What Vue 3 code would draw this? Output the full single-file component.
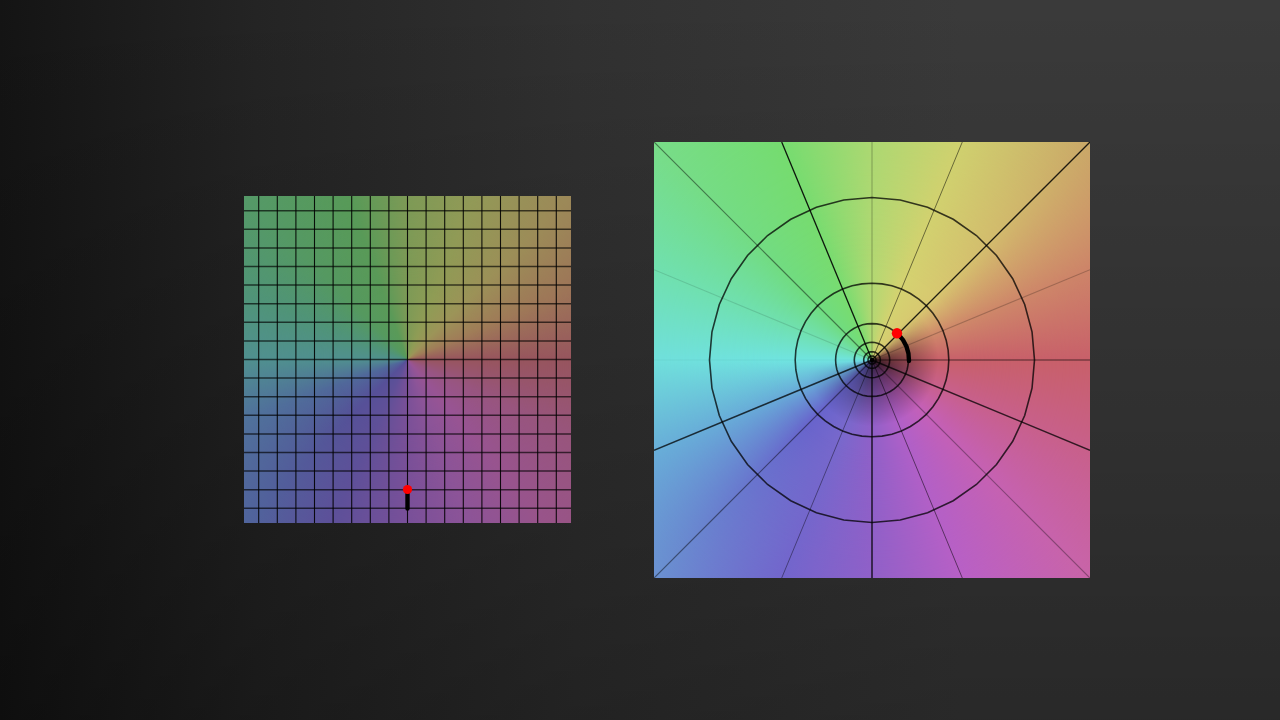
<template>
  <div class="page">
    <div class="panel panel-grid">
      <div class="swirl"></div>
      <svg class="lines" viewBox="-163.5 -163.5 327 327">
        <line v-for="k in gridSteps" :key="'v' + k" class="grid-v" :x1="k * 18.6" y1="-163.5" :x2="k * 18.6" y2="163.5" />
        <line v-for="k in gridSteps" :key="'h' + k" class="grid-h" x1="-163.5" :y1="k * 18.6" x2="163.5" :y2="k * 18.6" />
        <line class="trail" x1="0" y1="130" x2="0" y2="149" />
        <circle class="dot" cx="0" cy="130" r="4.6" />
      </svg>
    </div>

    <div class="panel panel-polar">
      <div class="swirl"></div>
      <div class="shade"></div>
      <svg class="lines" viewBox="-218 -218 436 436">
        <line
          v-for="ray in rays"
          :key="ray.angle"
          class="ray"
          x1="0"
          y1="0"
          :x2="ray.x"
          :y2="ray.y"
          :stroke-opacity="ray.strength"
          :stroke-width="ray.width"
        />
        <polygon v-for="ring in rings" :key="ring.r" class="ring" :points="ring.points" />
        <circle cx="0" cy="0" r="2.2" />
        <path class="trail" d="M 26 -26 A 37 37 0 0 1 37 1" />
        <circle class="dot" cx="25" cy="-26.8" r="5.2" />
      </svg>
    </div>
  </div>
</template>

<script setup>
// grid lines either side of the centre
const gridSteps = Array.from({ length: 17 }, (_, i) => i - 8)

// rays every 22.5deg, clockwise from the top, clipped to the square
const rayStyle = [
  [0.2, 1.4], [0.5, 1], [0.85, 1.3], [0.22, 1.2],
  [0.4, 1.5], [0.75, 1.4], [0.32, 1.2], [0.5, 1],
  [0.8, 1.5], [0.4, 1], [0.45, 1.2], [0.75, 1.5],
  [0.04, 1], [0.12, 1.2], [0.45, 1.2], [0.9, 1.3]
]
const rays = rayStyle.map(([strength, width], i) => {
  const a = (i * 22.5 * Math.PI) / 180
  const dx = Math.sin(a)
  const dy = -Math.cos(a)
  const len = 218 / Math.max(Math.abs(dx), Math.abs(dy))
  return { angle: i * 22.5, x: dx * len, y: dy * len, strength, width }
})

// outer rings are rough polygons, as in a coarse mesh
const rings = [
  [162.5, 36], [76.8, 48], [36.4, 48], [17.7, 40], [8.3, 32], [4, 24]
].map(([r, n]) => {
  const pts = []
  for (let i = 0; i < n; i++) {
    const a = (i / n) * Math.PI * 2
    pts.push(`${(r * Math.cos(a)).toFixed(2)},${(r * Math.sin(a)).toFixed(2)}`)
  }
  return { r, points: pts.join(' ') }
})
</script>

<style>
html,
body {
  margin: 0;
  background: #1f1f1f;
}
</style>

<style scoped>
.page {
  width: 1280px;
  height: 720px;
  box-sizing: border-box;
  padding: 0 190px 1px 244px;
  display: flex;
  align-items: center;
  gap: 83px;
  overflow: hidden;
  background:
    linear-gradient(180deg, rgba(0, 0, 0, 0) 0%, rgba(0, 0, 0, 0.3) 100%),
    linear-gradient(90deg, #141414 0%, #242424 20%, #313131 45%, #3a3a3a 75%, #3a3a3a 100%);
}
.panel {
  position: relative;
  flex: none;
  overflow: hidden;
  filter: blur(0.4px);
}
.panel-grid {
  width: 327px;
  height: 327px;
  background: conic-gradient(
    #7d9a56 0deg,
    #8f9c55 22deg,
    #9c9458 45deg,
    #a07d58 67deg,
    #98555e 90deg,
    #985580 115deg,
    #985494 140deg,
    #8c5498 160deg,
    #7a5098 180deg,
    #5f5098 205deg,
    #565098 225deg,
    #50689a 250deg,
    #50908f 270deg,
    #509478 292deg,
    #55995f 315deg,
    #5a9a58 340deg,
    #7d9a56 360deg
  );
}
.panel-grid .swirl {
  background: conic-gradient(
    #7d9a56 0deg,
    #939858 22deg,
    #9c8858 45deg,
    #9c7058 67deg,
    #96555e 90deg,
    #98557a 115deg,
    #985488 140deg,
    #8c5498 160deg,
    #78509a 180deg,
    #5c509a 205deg,
    #50659c 225deg,
    #50789c 250deg,
    #509090 270deg,
    #509478 292deg,
    #559968 315deg,
    #569a58 340deg,
    #7d9a56 360deg
  );
  mask-image: radial-gradient(circle at center, transparent 70px, #000 230px);
}
.panel-polar {
  width: 436px;
  height: 436px;
  background: conic-gradient(
    #b2d872 0deg,
    #d4d270 22deg,
    #d8c870 45deg,
    #cf8a6a 67deg,
    #c8606a 90deg,
    #c8608c 112deg,
    #c460b8 135deg,
    #b060c8 157deg,
    #9060c8 180deg,
    #7868cc 202deg,
    #6864cc 225deg,
    #68a8d8 247deg,
    #70e4e0 270deg,
    #70e0b0 292deg,
    #70dc80 315deg,
    #78dc70 337deg,
    #b2d872 360deg
  );
}
.panel-polar .swirl {
  background: conic-gradient(
    #a8d872 0deg,
    #ccd06e 22deg,
    #caa868 45deg,
    #cc8268 67deg,
    #c8606a 90deg,
    #c86088 112deg,
    #c864a8 135deg,
    #bc60c4 157deg,
    #9060c8 180deg,
    #7064cc 202deg,
    #6a90d0 225deg,
    #68b0d8 247deg,
    #70dcd8 270deg,
    #70e0b0 292deg,
    #78dc88 315deg,
    #74dc70 337deg,
    #a8d872 360deg
  );
  mask-image: radial-gradient(circle at center, transparent 90px, #000 300px);
}
.swirl,
.shade {
  position: absolute;
  inset: 0;
}
.shade {
  background: conic-gradient(
    rgba(0, 0, 0, 0) 0deg,
    rgba(0, 0, 0, 0) 40deg,
    rgba(0, 0, 0, 0.6) 75deg,
    rgba(0, 0, 0, 0.8) 110deg,
    rgba(0, 0, 0, 0.7) 160deg,
    rgba(0, 0, 0, 0.65) 195deg,
    rgba(0, 0, 0, 0.3) 235deg,
    rgba(0, 0, 0, 0) 265deg,
    rgba(0, 0, 0, 0) 360deg
  );
  mask-image: radial-gradient(circle at center, #000 0, rgba(0, 0, 0, 0.65) 20px, transparent 66px);
}
.lines {
  position: absolute;
  inset: 0;
  width: 100%;
  height: 100%;
  display: block;
}
.grid-v {
  stroke: #000;
  stroke-width: 1.1;
  stroke-opacity: 0.9;
}
.grid-h {
  stroke: #000;
  stroke-width: 1.5;
  stroke-opacity: 0.65;
}
.ray {
  stroke: #000;
}
.ring {
  fill: none;
  stroke: #000;
  stroke-width: 1.6;
  stroke-opacity: 0.75;
}
.trail {
  fill: none;
  stroke: #000;
  stroke-width: 4.4;
  stroke-linecap: round;
}
.dot {
  fill: #f00;
}
</style>
